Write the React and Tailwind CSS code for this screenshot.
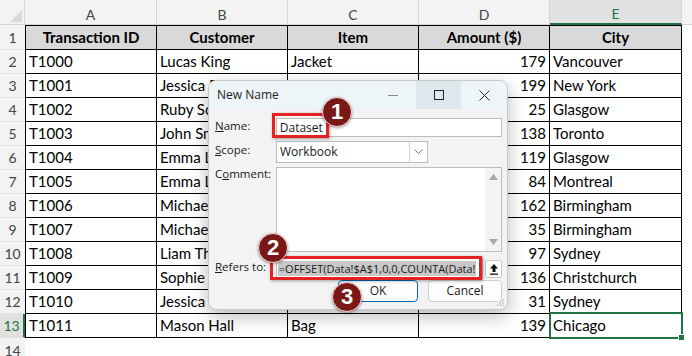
import React from "react";

const widths = ["w-[132px] border-l", "w-[131px]", "w-[131px]", "w-[131px]", "w-[132px]"];
const hw = ["w-[132px]", "w-[131px]", "w-[131px]", "w-[131px]", "w-[132px]"];
const letters = ["A", "B", "C", "D", "E"];
const head = ["Transaction ID", "Customer", "Item", "Amount ($)", "City"];
const rows = [
  ["T1000", "Lucas King", "Jacket", "179", "Vancouver"],
  ["T1001", "Jessica Davis", "Shoes", "199", "New York"],
  ["T1002", "Ruby Scott", "Hat", "25", "Glasgow"],
  ["T1003", "John Smith", "Scarf", "138", "Toronto"],
  ["T1004", "Emma Lewis", "Gloves", "119", "Glasgow"],
  ["T1005", "Emma Lee", "Belt", "84", "Montreal"],
  ["T1006", "Michael Brown", "Jacket", "162", "Birmingham"],
  ["T1007", "Michael Green", "Socks", "35", "Birmingham"],
  ["T1008", "Liam Thompson", "Shirt", "97", "Sydney"],
  ["T1009", "Sophie Walker", "Coat", "136", "Christchurch"],
  ["T1010", "Jessica Davis", "Hat", "31", "Sydney"],
  ["T1011", "Mason Hall", "Bag", "139", "Chicago"],
];

function Badge({ n, cls }) {
  return (
    <div
      className={`absolute w-[30px] h-[30px] rounded-full bg-[#7a1818] border border-[#f3d0d0] shadow-[0_1px_3px_rgba(0,0,0,0.4)] flex items-center justify-center text-white font-bold text-[22px] leading-none font-['Liberation_Sans',sans-serif] ${cls}`}
    >
      {n}
    </div>
  );
}

export default function App() {
  return (
    <div className="relative w-[692px] h-[356px] overflow-hidden bg-white font-['Lato',sans-serif] text-[15px] text-black">
      {/* column headers */}
      <div className="flex h-[25px] bg-[#f3f3f3]">
        <div className="w-[25px] h-full border-r border-b border-[#d4d4d4] relative">
          <div className="absolute right-[2px] bottom-[2px] w-0 h-0 border-l-[12px] border-l-transparent border-b-[12px] border-b-[#dadada]" />
        </div>
        {letters.map((l, i) => (
          <div
            key={l}
            className={`${hw[i]} h-full flex items-center justify-center pt-[4px] text-[14px] border-r border-[#d4d4d4] ${
              i === 4 ? "bg-[#e1e1e1] text-[#217346] border-b-2 border-b-[#217346]" : "text-[#444] border-b border-b-[#d4d4d4]"
            }`}
          >
            {l}
          </div>
        ))}
        <div className="flex-1 border-b border-[#d4d4d4]" />
      </div>

      {/* row 1 */}
      <div className="flex h-[25px]">
        <div className="w-[25px] h-full bg-[#f3f3f3] flex items-center justify-center text-[14px] text-[#444] border-b border-[#e1e1e1]">1</div>
        {head.map((h, i) => (
          <div
            key={h}
            className={`${widths[i]} h-full border-r border-t border-b border-black bg-[#d9d9d9] flex items-center justify-center font-bold`}
          >
            {h}
          </div>
        ))}
      </div>

      {rows.map((r, ri) => {
        const sel = ri === 11;
        return (
          <div key={ri} className="flex h-[24px]">
            <div
              className={`w-[25px] h-full flex items-center justify-center text-[14px] border-b border-[#e1e1e1] ${
                sel ? "bg-[#e1e1e1] text-[#217346] border-r-2 border-r-[#217346]" : "bg-[#f3f3f3] text-[#444]"
              }`}
            >
              {ri + 2}
            </div>
            {r.map((c, i) => (
              <div
                key={i}
                className={`${widths[i]} h-full border-r border-b border-black flex items-center px-[3px] whitespace-nowrap overflow-hidden ${
                  i === 3 ? "justify-end" : ""
                }`}
              >
                {c}
              </div>
            ))}
          </div>
        );
      })}
      <div className="flex h-[24px]">
        <div className="w-[25px] h-full bg-[#f3f3f3] flex items-center justify-center text-[14px] text-[#444]">14</div>
      </div>

      {/* selected cell */}
      <div className="absolute left-[549px] top-[312px] w-[134px] h-[27px] border-2 border-[#217346]" />
      <div className="absolute left-[678px] top-[334px] w-[7px] h-[7px] bg-[#217346] border border-white" />

      {/* dialog */}
      <div className="absolute left-[208px] top-[80px] w-[300px] h-[230px] rounded-[8px] bg-[#f3f3f3] border border-[#c9c9c9] shadow-[0_6px_18px_rgba(0,0,0,0.28)] overflow-hidden font-['Open_Sans',sans-serif] text-[11.5px] text-[#1a1a1a]">
        <div className="flex h-[28px] bg-[#eef5f8] items-stretch">
          <div className="flex-1 flex items-center pl-[8px] text-[12px] text-[#222]">New Name</div>
          <div className="w-[46px] flex items-center justify-center">
            <div className="w-[10px] h-px bg-[#8a8a8a]" />
          </div>
          <div className="w-[45px] flex items-center justify-center bg-[#dfe9ed]">
            <div className="w-[10px] h-[10px] border border-[#222]" />
          </div>
          <div className="w-[46px] flex items-center justify-center">
            <svg width="11" height="11" viewBox="0 0 11 11">
              <path d="M0.5 0.5 L10.5 10.5 M10.5 0.5 L0.5 10.5" stroke="#222" strokeWidth="1" />
            </svg>
          </div>
        </div>

        <div className="flex flex-col pl-[6px] pr-[5px]">
          <div className="flex items-center mt-[9px] h-[19px]">
            <div className="w-[61px] -mt-[3px]"><span className="underline">N</span>ame:</div>
            <div className="w-[227px] h-full bg-white border border-[#bdbdbd] flex items-center pl-[3px] text-[12px]">Dataset</div>
          </div>
          <div className="flex items-center mt-[4px] h-[22px]">
            <div className="w-[61px] -mt-[4px]"><span className="underline">S</span>cope:</div>
            <div className="w-[152px] h-full bg-white border border-[#bdbdbd] flex items-center pl-[3px] text-[12px]">
              <span className="flex-1">Workbook</span>
              <div className="w-[18px] h-full border-l border-[#d0d0d0] flex items-center justify-center">
                <svg width="9" height="6" viewBox="0 0 9 6">
                  <path d="M0.5 0.5 L4.5 4.5 L8.5 0.5" stroke="#777" strokeWidth="1" fill="none" />
                </svg>
              </div>
            </div>
          </div>
          <div className="flex items-start mt-[4px] h-[85px]">
            <div className="w-[61px] -mt-[2px]">C<span className="underline">o</span>mment:</div>
            <div className="w-[227px] h-full bg-white border border-[#bdbdbd] flex justify-end">
              <div className="w-[16px] h-full bg-[#f3f3f3] flex flex-col items-center justify-between py-[6px]">
                <svg width="9" height="6" viewBox="0 0 9 6"><path d="M0 6 L4.5 0 L9 6 Z" fill="#a8a8a8" /></svg>
                <svg width="9" height="6" viewBox="0 0 9 6"><path d="M0 0 L4.5 6 L9 0 Z" fill="#a8a8a8" /></svg>
              </div>
            </div>
          </div>
          <div className="flex items-center mt-[6px] h-[21px]">
            <div className="w-[61px] -mt-[3px]"><span className="underline">R</span>efers to:</div>
            <div className="w-[208px] h-full bg-white border border-[#bdbdbd] flex items-center pl-px overflow-hidden whitespace-nowrap">
              <span className="bg-[#c8c8c8] text-[11px] leading-[15px] px-px">=OFFSET(Data!$A$1,0,0,COUNTA(Data!</span>
            </div>
            <div className="ml-[2px] w-[17px] h-[18px] bg-white border border-[#c8c8c8] rounded-[2px] flex items-center justify-center">
              <svg width="10" height="12" viewBox="0 0 10 12">
                <path d="M5 1 L9 5.5 H6.5 V9 H3.5 V5.5 H1 Z" fill="#111" />
                <rect x="1" y="10.5" width="8" height="1.3" fill="#111" />
              </svg>
            </div>
          </div>
          <div className="flex mt-[1px] h-[22px] pl-[123px] gap-[10px]">
            <div className="w-[80px] h-full bg-[#fdfdfd] border border-[#0067c0] rounded-[4px] flex items-center justify-center text-[12px]">OK</div>
            <div className="w-[74px] h-full bg-[#fdfdfd] border border-[#d0d0d0] rounded-[4px] flex items-center justify-center text-[12px]">Cancel</div>
          </div>
        </div>
        <svg className="absolute right-[2px] bottom-[2px]" width="10" height="10" viewBox="0 0 10 10">
          <path d="M9 2 L2 9 M9 5 L5 9 M9 8 L8 9" stroke="#b0b0b0" strokeWidth="1" />
        </svg>
      </div>

      {/* annotations */}
      <div className="absolute left-[272px] top-[113px] w-[57px] h-[25px] border-[3px] border-[#e52222] shadow-[1px_1px_3px_rgba(0,0,0,0.35)]" />
      <div className="absolute left-[270px] top-[256px] w-[212px] h-[24px] border-[3px] border-[#e52222] shadow-[1px_1px_3px_rgba(0,0,0,0.35)]" />
      <Badge n="1" cls="left-[322px] top-[97px]" />
      <Badge n="2" cls="left-[258px] top-[233px]" />
      <Badge n="3" cls="left-[332px] top-[282px]" />
    </div>
  );
}
